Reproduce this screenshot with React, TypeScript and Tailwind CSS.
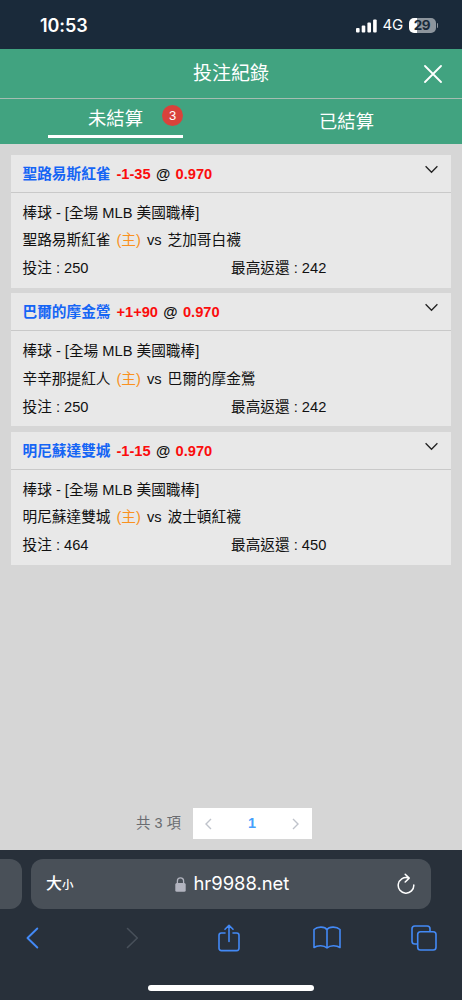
import { useState } from "react";

const records = [
  { id: 1, pick: "聖路易斯紅雀", line: "-1-35", odds: "0.970", home: "聖路易斯紅雀", away: "芝加哥白襪", stake: 250, payout: 242 },
  { id: 2, pick: "巴爾的摩金鶯", line: "+1+90", odds: "0.970", home: "辛辛那提紅人", away: "巴爾的摩金鶯", stake: 250, payout: 242 },
  { id: 3, pick: "明尼蘇達雙城", line: "-1-15", odds: "0.970", home: "明尼蘇達雙城", away: "波士頓紅襪", stake: 464, payout: 450 },
];

type BetRecord = (typeof records)[number];

function StatusBar() {
  return (
    <div className="flex h-[49px] items-center justify-between bg-[#1a2a3a] pt-[2px] pr-[24px] pl-[40px] font-['Inter'] text-white">
      <span className="text-[18px] font-semibold tracking-[-0.1px]">10:53</span>
      <div className="flex items-center">
        <svg className="h-[14px] w-[21px]" viewBox="0 0 21 14" fill="currentColor">
          <rect x="0" y="9" width="3.6" height="4.6" rx="1" />
          <rect x="5.7" y="6.6" width="3.6" height="7" rx="1" />
          <rect x="11.4" y="3.6" width="3.6" height="10" rx="1" />
          <rect x="17.1" y="0.4" width="3.6" height="13.2" rx="1" />
        </svg>
        <span className="ml-[6px] w-[20px] text-[15px] tracking-[-0.3px]">4G</span>
        <div className="ml-[6px] flex h-[15px] w-[27px] items-center justify-center rounded-[5px] bg-[linear-gradient(90deg,#fff_30%,#8d959d_30%)] text-[13.5px] leading-none font-bold tracking-[-0.3px] text-[#1a2a3a]">
          29
        </div>
        <span className="ml-[1px] h-[5px] w-[1.5px] rounded-r-full bg-[#8d959d]" />
      </div>
    </div>
  );
}

function BetCard({ record }: { record: BetRecord }) {
  return (
    <article className="h-[133.2px] bg-[#e8e8e8] text-[14.67px] text-[#111]">
      <div className="flex h-[38px] items-start justify-between border-b border-[#c9c9c9] pr-[13px] pl-[11.5px]">
        <h2 className="flex gap-[5.3px] leading-[38px] font-bold whitespace-nowrap">
          <span className="mr-[0.7px] text-[#1565f5]">{record.pick}</span>
          <span className="text-[#fb0d0d]">{record.line}</span>
          <span>@</span>
          <span className="text-[#fb0d0d]">{record.odds}</span>
        </h2>
        <svg className="mt-[10px] h-[9px] w-[13px]" viewBox="0 0 13 9" fill="none" stroke="#222" strokeWidth="1.3">
          <path d="M.6 1.2 6.5 7.2 12.4 1.2" />
        </svg>
      </div>
      <div className="pt-[7px] pl-[11.5px] leading-[27.8px] whitespace-nowrap">
        <p>棒球 - [全場 MLB 美國職棒]</p>
        <p className="flex gap-[6px]">
          <span>{record.home}</span>
          <span className="text-[#fa911e]">(主)</span>
          <span>vs</span>
          <span>{record.away}</span>
        </p>
        <div className="grid grid-cols-[208.5px_1fr]">
          <span>投注 : {record.stake}</span>
          <span>最高返還 : {record.payout}</span>
        </div>
      </div>
    </article>
  );
}

function BrowserBar() {
  return (
    <footer className="h-[150px] bg-[#28303a] pt-[9px] text-[#4389f5]">
      <div className="flex h-[50px] gap-[9px]">
        <div className="w-[22px] rounded-r-[12px] bg-[#495058]" />
        <div className="flex w-[400px] items-center rounded-[12px] bg-[#495058] pr-[16px] pl-[15px] text-white">
          <div className="flex w-[129px] items-baseline font-medium">
            <span className="text-[16px]">大</span>
            <span className="text-[11.5px]">小</span>
          </div>
          <svg className="h-[15px] w-[11px]" viewBox="0 0 11 15" fill="none">
            <rect x="0.3" y="6" width="10.4" height="8.7" rx="1.5" fill="#b2b4bf" />
            <path d="M2.4 7V4a3.1 3.1 0 0 1 6.2 0v3" stroke="#b2b4bf" strokeWidth="1.3" />
          </svg>
          <span className="ml-[7.5px] font-['Inter'] text-[18.4px]">hr9988.net</span>
          <svg className="ml-auto h-[22px] w-[18px]" viewBox="0 0 18 22" fill="none" stroke="currentColor" strokeWidth="1.5" strokeLinecap="round" strokeLinejoin="round">
            <path d="M11 4.8A7.8 7.8 0 1 0 16.8 12M8.2 1.2l4 3.9-4 3.9" />
          </svg>
        </div>
      </div>
      <nav className="grid h-[57px] w-[490px] -translate-x-[17px] grid-cols-5 items-center justify-items-center">
        <svg className="h-[22px] w-[13px]" viewBox="0 0 13 22" fill="none" stroke="currentColor" strokeWidth="1.9" strokeLinecap="round" strokeLinejoin="round">
          <path d="M11.3 1.5 1.5 11l9.8 9.5" />
        </svg>
        <svg className="ml-[4px] h-[22px] w-[13px]" viewBox="0 0 13 22" fill="none" stroke="#48505a" strokeWidth="1.6" strokeLinecap="round" strokeLinejoin="round">
          <path d="m1.5 1.5 9.8 9.5-9.8 9.5" />
        </svg>
        <svg className="ml-[2px] h-[28px] w-[24px]" viewBox="0 0 24 28" fill="none" stroke="currentColor" strokeWidth="1.6" strokeLinecap="round" strokeLinejoin="round">
          <path d="M8 9H4.300A2.300 2.300 0 0 0 2 11.300v13a2.300 2.300 0 0 0 2.300 2.300h15.400a2.300 2.300 0 0 0 2.300-2.300v-13A2.300 2.300 0 0 0 19.700 9H16M12 17.500V1.500M8 5.300 12 1.300l4 4" />
        </svg>
        <svg className="ml-[1px] h-[23px] w-[28px]" viewBox="0 0 28 23" fill="none" stroke="currentColor" strokeWidth="1.6" strokeLinecap="round" strokeLinejoin="round">
          <path d="M14 3.800C12 .4 4.500.2 1 3.500V21.500c3.500-2.500 10-2.500 13 .5 3-3 9.500-3 13-.5V3.500C23.500.2 16 .4 14 3.800ZM14 3.800V22" />
        </svg>
        <svg className="h-[26px] w-[26px]" viewBox="0 0 26 26" fill="none" stroke="currentColor" strokeWidth="1.6">
          <rect x="6.700" y="6.700" width="18.300" height="18.300" rx="2.800" />
          <path d="M6.700 19H3.800A2.800 2.800 0 0 1 1 16.200V3.800A2.800 2.800 0 0 1 3.800 1h12.400A2.800 2.800 0 0 1 19 3.800v2.900" />
        </svg>
      </nav>
      <div className="mx-auto mt-[19px] h-[6px] w-[166px] rounded-full bg-white" />
    </footer>
  );
}

export default function App() {
  const [settled, setSettled] = useState(false);

  return (
    <div className="flex h-[1000px] w-[462px] flex-col overflow-hidden bg-[#d6d6d6] font-['Liberation_Sans','Noto_Sans_CJK_TC',sans-serif]">
      <StatusBar />

      {/* Header */}
      <header className="flex h-[50px] items-center border-b border-[#a5bdb2] bg-[#41a380] pr-[20px] pl-[38px] text-white">
        <h1 className="grow pt-[2px] text-center text-[19px]">投注紀錄</h1>
        <button aria-label="close">
          <svg className="h-[18px] w-[18px]" viewBox="0 0 18 18" stroke="currentColor" strokeWidth="1.8" strokeLinecap="round">
            <path d="m1 1 16 16M17 1 1 17" />
          </svg>
        </button>
      </header>

      {/* Tabs */}
      <div className="grid h-[45px] shrink-0 grid-cols-2 bg-[#41a380] text-[18.3px] text-white">
        <button className="flex flex-col items-center" onClick={() => setSettled(false)}>
          <span className="relative h-[36px] w-[135px] text-center leading-[40px]">
            未結算
            <span className="absolute top-[6px] right-0 flex h-[21px] w-[21px] items-center justify-center rounded-full bg-[#d9423b] text-[13px] leading-none">3</span>
          </span>
          {!settled && <span className="h-[3px] w-[135px] bg-white" />}
        </button>
        <button className="leading-[46px]" onClick={() => setSettled(true)}>已結算</button>
      </div>

      {/* Bet list */}
      <main className="flex grow flex-col gap-[5.3px] px-[11px] pt-[10.7px]">
        {!settled && records.map((record) => <BetCard key={record.id} record={record} />)}
      </main>

      {/* Pagination */}
      <div className="mb-[11px] ml-[136px] flex h-[31px] items-center text-[14.4px] text-[#6a6c70]">
        <span className="w-[57px]">共 3 項</span>
        <div className="flex h-full w-[119px] items-center justify-between bg-white px-[12px]">
          <svg className="h-[12px] w-[7px]" viewBox="0 0 7 12" fill="none" stroke="#bfc3cb" strokeWidth="1.4">
            <path d="M6 1 1 6l5 5" />
          </svg>
          <span className="font-bold text-[#459ffc]">1</span>
          <svg className="mr-[1px] h-[12px] w-[7px]" viewBox="0 0 7 12" fill="none" stroke="#bfc3cb" strokeWidth="1.4">
            <path d="m1 1 5 5-5 5" />
          </svg>
        </div>
      </div>

      <BrowserBar />
    </div>
  );
}
